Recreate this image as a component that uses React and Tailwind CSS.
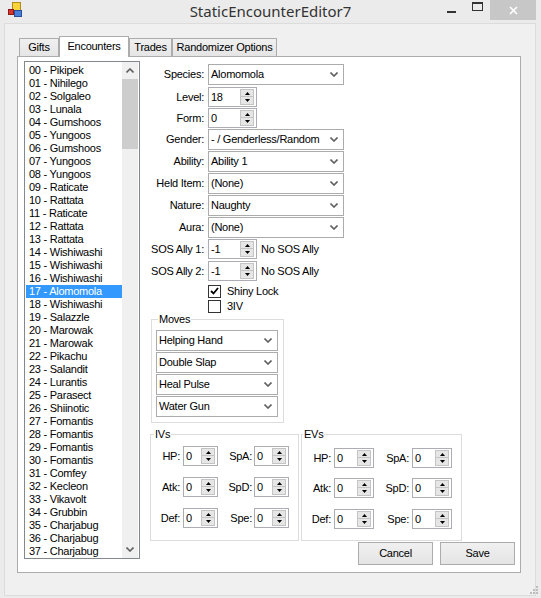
import React from 'react';

const ENTRIES = [
  '00 - Pikipek', '01 - Nihilego', '02 - Solgaleo', '03 - Lunala', '04 - Gumshoos',
  '05 - Yungoos', '06 - Gumshoos', '07 - Yungoos', '08 - Yungoos', '09 - Raticate',
  '10 - Rattata', '11 - Raticate', '12 - Rattata', '13 - Rattata', '14 - Wishiwashi',
  '15 - Wishiwashi', '16 - Wishiwashi', '17 - Alomomola', '18 - Wishiwashi', '19 - Salazzle',
  '20 - Marowak', '21 - Marowak', '22 - Pikachu', '23 - Salandit', '24 - Lurantis',
  '25 - Parasect', '26 - Shiinotic', '27 - Fomantis', '28 - Fomantis', '29 - Fomantis',
  '30 - Fomantis', '31 - Comfey', '32 - Kecleon', '33 - Vikavolt', '34 - Grubbin',
  '35 - Charjabug', '36 - Charjabug', '37 - Charjabug',
];

const TABS = [
  { label: 'Gifts', w: 'w-[40px]' },
  { label: 'Encounters', w: 'w-[70px]', active: true },
  { label: 'Trades', w: 'w-[43px]' },
  { label: 'Randomizer Options', w: 'w-[105px]' },
];

const MOVES = ['Helping Hand', 'Double Slap', 'Heal Pulse', 'Water Gun'];

function Chevron({ up }) {
  return (
    <svg width="8" height="5" viewBox="0 0 8 5" className="shrink-0">
      <polyline
        points={up ? '0.5,4.5 4,1 7.5,4.5' : '0.5,0.5 4,4 7.5,0.5'}
        fill="none"
        stroke="#606060"
        strokeWidth="1.6"
      />
    </svg>
  );
}

function Arrow({ up }) {
  return (
    <svg width="5" height="3" viewBox="0 0 5 3">
      <polygon points={up ? '0,3 2.5,0 5,3' : '0,0 5,0 2.5,3'} fill="#000" />
    </svg>
  );
}

function Combo({ value, className }) {
  return (
    <div className={`flex items-center justify-between h-[21px] border border-[#acacac] bg-white pl-[2px] pr-[5px] ${className}`}>
      <span className="whitespace-nowrap">{value}</span>
      <Chevron />
    </div>
  );
}

function Num({ value, className }) {
  return (
    <div className={`flex h-[20px] border border-[#abadb3] bg-white ${className}`}>
      <span className="flex-1 pl-[2px] leading-[18px]">{value}</span>
      <div className="flex flex-col w-[14px] my-[1px] mr-[2px]">
        <div className="flex h-[8px] items-center justify-center bg-[#e6e6e6] border border-[#c4c4c4]">
          <Arrow up />
        </div>
        <div className="flex h-[8px] items-center justify-center bg-[#e6e6e6] border border-[#c4c4c4] border-t-0">
          <Arrow />
        </div>
      </div>
    </div>
  );
}

function Row({ label, className, children }) {
  return (
    <div className={`flex items-center ${className}`}>
      <span className="w-[54px] text-right whitespace-nowrap">{label}</span>
      <div className="ml-[4px] flex items-center">{children}</div>
    </div>
  );
}

function Check({ label, checked, className }) {
  return (
    <div className={`flex items-center h-[14px] ml-[58px] ${className}`}>
      <div className="flex items-center justify-center w-[13px] h-[13px] border border-[#333] bg-white">
        {checked && (
          <svg width="9" height="8" viewBox="0 0 9 8">
            <polyline points="1,4 3.5,6.5 8,1" fill="none" stroke="#000" strokeWidth="1.8" />
          </svg>
        )}
      </div>
      <span className="ml-[6px]">{label}</span>
    </div>
  );
}

function StatRow({ a, b, className, lw1, nw, lw2, gap2 }) {
  return (
    <div className={`flex items-center ${className}`}>
      <span className={`${lw1} text-right`}>{a}:</span>
      <Num value="0" className={`ml-[3px] ${nw}`} />
      <span className={`${lw2} text-right`}>{b}:</span>
      <Num value="0" className={`${gap2} ${nw}`} />
    </div>
  );
}

export default function App() {
  return (
    <div
      className="relative w-[541px] h-[598px] bg-[#ebebeb] overflow-hidden text-[11px] leading-[13px] tracking-[-0.25px] text-black"
      style={{ fontFamily: '"Liberation Sans", Arial, sans-serif' }}
    >
      {/* title bar */}
      <div className="relative h-[23px]">
        <svg width="14" height="15" viewBox="0 0 14 15" className="absolute left-[8px] top-[2px]">
          <rect x="4.5" y="0.5" width="8" height="8" fill="#f8d43a" stroke="#b08a1a" />
          <rect x="0.5" y="7.5" width="5" height="5" fill="#d9342b" stroke="#8a1a14" />
          <rect x="6.5" y="8.5" width="7" height="6" fill="#4a7fd8" stroke="#2a4f9a" />
        </svg>
        <div
          className="text-center text-[15px] leading-[23px] tracking-normal text-[#333]"
          style={{ fontFamily: '"Noto Sans", "Open Sans", sans-serif' }}
        >
          StaticEncounterEditor7
        </div>
        <div className="absolute right-[5px] top-0 flex h-[20px]">
          <div className="w-[26px] flex items-center justify-center">
            <div className="w-[9px] h-[2px] bg-[#333] mt-[4px]" />
          </div>
          <div className="w-[26px] flex items-start justify-center pt-[2px]">
            <div className="w-[11px] h-[9px] border border-[#333] border-t-2" />
          </div>
          <div className="w-[46px] bg-[#c7c7c7] flex items-center justify-center">
            <svg width="9" height="9" viewBox="0 0 9 9">
              <path d="M1 1 L8 8 M8 1 L1 8" stroke="#fff" strokeWidth="1.6" />
            </svg>
          </div>
        </div>
      </div>

      {/* client area */}
      <div className="ml-[4px] w-[532px] h-[573px] bg-[#f0f0f0] border border-[#dcdcdc] pl-[12px] pt-[12px]">
        {/* tab strip */}
        <div className="flex items-end h-[20px] pl-[2px]">
          {TABS.map((t) =>
            t.active ? (
              <div
                key={t.label}
                className={`relative z-10 ${t.w} h-[21px] -mb-[1px] bg-white border border-b-0 border-[#acacac] flex items-center justify-center pb-[2px]`}
              >
                {t.label}
              </div>
            ) : (
              <div
                key={t.label}
                className={`${t.w} h-[18px] bg-gradient-to-b from-[#f0f0f0] to-[#e5e5e5] border border-b-0 border-[#acacac] flex items-center justify-center whitespace-nowrap`}
              >
                {t.label}
              </div>
            )
          )}
        </div>

        {/* tab page */}
        <div className="flex w-[504px] h-[517px] bg-white border border-[#acacac]">
          {/* listbox */}
          <div className="flex ml-[6px] mt-[4px] w-[116px] h-[498px] border border-[#828790] bg-white">
            <div className="flex-1 pt-[2px] overflow-hidden">
              {ENTRIES.map((e) =>
                e.startsWith('17') ? (
                  <div key={e} className="h-[13px] ml-[1px] pl-[3px] bg-[#3399ff] text-white whitespace-nowrap">
                    {e}
                  </div>
                ) : (
                  <div key={e} className="h-[13px] ml-[1px] pl-[3px] whitespace-nowrap">
                    {e}
                  </div>
                )
              )}
            </div>
            <div className="flex flex-col w-[16px] mr-[1px] bg-[#f0f0f0]">
              <div className="h-[17px] flex items-center justify-center">
                <Chevron up />
              </div>
              <div className="h-[70px] bg-[#cdcdcd]" />
              <div className="flex-1" />
              <div className="h-[17px] flex items-center justify-center">
                <Chevron />
              </div>
            </div>
          </div>

          {/* editor column */}
          <div className="ml-[10px] flex-1 flex flex-col">
            <Row label="Species:" className="mt-[7px]">
              <Combo value="Alomomola" className="w-[136px]" />
            </Row>
            <Row label="Level:" className="mt-[2px]">
              <Num value="18" className="w-[49px]" />
            </Row>
            <Row label="Form:" className="mt-[1px]">
              <Num value="0" className="w-[49px]" />
            </Row>
            <Row label="Gender:" className="mt-[1px]">
              <Combo value="- / Genderless/Random" className="w-[136px]" />
            </Row>
            <Row label="Ability:" className="mt-[1px]">
              <Combo value="Ability 1" className="w-[136px]" />
            </Row>
            <Row label="Held Item:" className="mt-[1px]">
              <Combo value="(None)" className="w-[136px]" />
            </Row>
            <Row label="Nature:" className="mt-[1px]">
              <Combo value="Naughty" className="w-[136px]" />
            </Row>
            <Row label="Aura:" className="mt-[1px]">
              <Combo value="(None)" className="w-[136px]" />
            </Row>
            <Row label="SOS Ally 1:" className="mt-[1px]">
              <Num value="-1" className="w-[49px]" />
              <span className="ml-[4px]">No SOS Ally</span>
            </Row>
            <Row label="SOS Ally 2:" className="mt-[2px]">
              <Num value="-1" className="w-[49px]" />
              <span className="ml-[4px]">No SOS Ally</span>
            </Row>
            <Check label="Shiny Lock" checked className="mt-[3px]" />
            <Check label="3IV" className="mt-[1px]" />

            <fieldset className="ml-[1px] w-[133px] border border-[#dcdcdc] pl-[4px] pb-[5px]">
              <legend className="ml-[2px] px-[1px]">Moves</legend>
              <div className="flex flex-col gap-[1px] mt-[4px]">
                {MOVES.map((m) => (
                  <Combo key={m} value={m} className="w-[122px]" />
                ))}
              </div>
            </fieldset>

            <div className="flex mt-[5px]">
              <fieldset className="w-[149px] h-[113px] border border-[#dcdcdc]">
                <legend className="ml-[3px] px-[1px]">IVs</legend>
                <StatRow a="HP" b="SpA" className="mt-[5px]" lw1="w-[29px]" nw="w-[35px]" lw2="w-[34px]" gap2="ml-[2px]" />
                <StatRow a="Atk" b="SpD" className="mt-[11px]" lw1="w-[29px]" nw="w-[35px]" lw2="w-[34px]" gap2="ml-[2px]" />
                <StatRow a="Def" b="Spe" className="mt-[11px]" lw1="w-[29px]" nw="w-[35px]" lw2="w-[34px]" gap2="ml-[2px]" />
              </fieldset>
              <fieldset className="ml-[2px] w-[161px] h-[113px] border border-[#dcdcdc]">
                <legend className="ml-[1px] px-[1px]">EVs</legend>
                <StatRow a="HP" b="SpA" className="mt-[7px]" lw1="w-[29px]" nw="w-[40px]" lw2="w-[35px]" gap2="ml-[3px]" />
                <StatRow a="Atk" b="SpD" className="mt-[10px]" lw1="w-[29px]" nw="w-[40px]" lw2="w-[35px]" gap2="ml-[3px]" />
                <StatRow a="Def" b="Spe" className="mt-[11px]" lw1="w-[29px]" nw="w-[40px]" lw2="w-[35px]" gap2="ml-[3px]" />
              </fieldset>
            </div>

            <div className="flex justify-end gap-[7px] mt-[1px] pr-[5px]">
              <button className="w-[75px] h-[23px] border border-[#acacac] bg-gradient-to-b from-[#f0f0f0] to-[#e5e5e5]">
                Cancel
              </button>
              <button className="w-[75px] h-[23px] border border-[#acacac] bg-gradient-to-b from-[#f0f0f0] to-[#e5e5e5]">
                Save
              </button>
            </div>
          </div>
        </div>
      </div>

      {/* size grip */}
      <svg width="8" height="8" viewBox="0 0 8 8" className="absolute right-[3px] bottom-[4px]">
        <rect x="6" y="0" width="2" height="2" fill="#bdbdbd" />
        <rect x="3" y="3" width="2" height="2" fill="#bdbdbd" />
        <rect x="6" y="3" width="2" height="2" fill="#bdbdbd" />
        <rect x="0" y="6" width="2" height="2" fill="#bdbdbd" />
        <rect x="3" y="6" width="2" height="2" fill="#bdbdbd" />
        <rect x="6" y="6" width="2" height="2" fill="#bdbdbd" />
      </svg>
    </div>
  );
}
